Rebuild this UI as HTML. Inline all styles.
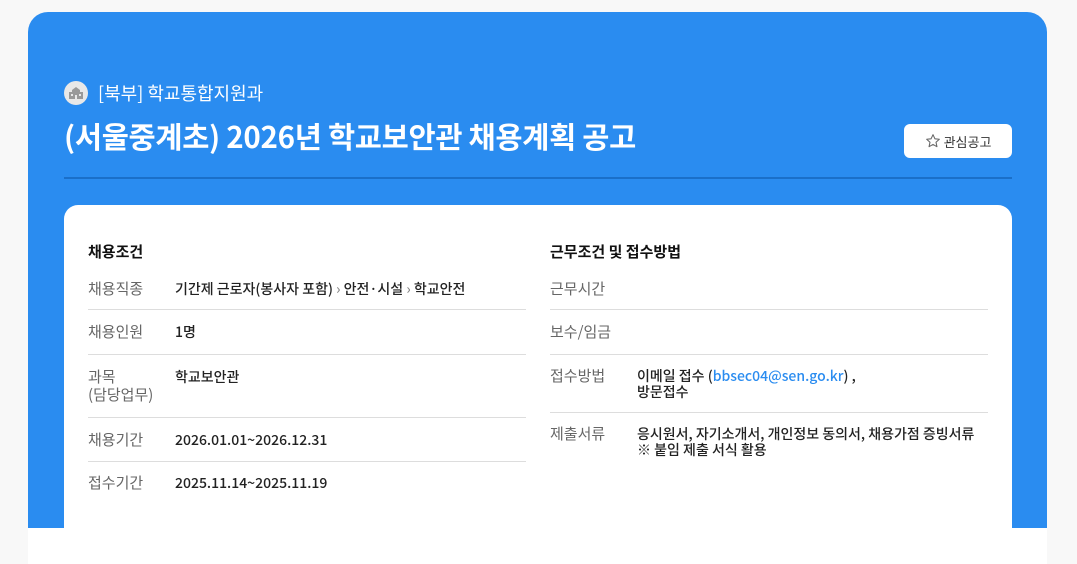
<!DOCTYPE html>
<html><head><meta charset="utf-8"><style>
*{margin:0;padding:0;box-sizing:border-box}
html,body{width:1077px;height:564px;overflow:hidden}
body{background:#f8f8f8;font-family:"Noto Sans CJK KR","Liberation Sans",sans-serif;position:relative}
.blue{position:absolute;left:28px;top:12px;width:1019px;height:516px;background:#2a8cf0;border-radius:20px 20px 0 0}
.wbot{position:absolute;left:28px;top:528px;width:1019px;height:40px;background:#fff}
.sub{position:absolute;left:64px;top:80px;color:#fff;font-size:18px;display:flex;align-items:center;gap:10px;line-height:26px}
.ic{width:24px;height:24px;border-radius:50%;background:#e8e8e8;display:flex;align-items:center;justify-content:center}
h1{position:absolute;left:64px;top:115px;color:#fff;font-size:29.5px;font-weight:bold;letter-spacing:-0.3px;line-height:42px}
.btn{position:absolute;left:904px;top:124px;width:108px;height:34px;background:#fff;border-radius:6px;font-size:13px;color:#333;display:flex;align-items:center;justify-content:center;gap:3px}
.hr{position:absolute;left:64px;top:177px;width:948px;height:2px;background:#1a6fc9}
.card{position:absolute;left:64px;top:205px;width:948px;height:359px;background:#fff;border-radius:14px 14px 0 0}
.col{position:absolute;top:39px;width:438px}
.t{font-size:15px;font-weight:bold;color:#111;height:24px;line-height:16px}
.r{display:flex;border-bottom:1px solid #ddd}
.r:last-child{border-bottom:none}
.l{width:87px;font-size:15px;color:#666;line-height:18px;flex:none}
.v{font-size:14px;color:#222;line-height:16px;padding-top:1px;font-weight:500}
a{color:#2a8cf0;text-decoration:none}
</style></head><body>
<div class="blue"></div><div class="wbot"></div>
<div class="sub"><div class="ic"><svg width="16" height="14" viewBox="0 0 16 14"><path d="M8 1 L12 4 V6 H15 V13 H1 V6 H4 V4 Z" fill="#999"/><rect x="7" y="9" width="2" height="4" fill="#e8e8e8"/><rect x="3" y="8" width="2" height="2" fill="#e8e8e8"/><rect x="11" y="8" width="2" height="2" fill="#e8e8e8"/></svg></div><span>[북부] 학교통합지원과</span></div>
<h1>(서울중계초) 2026년 학교보안관 채용계획 공고</h1>
<div class="btn"><svg width="16" height="16" viewBox="0 0 24 24"><path d="M12 2.5l2.9 6.2 6.6.7-5 4.5 1.4 6.6L12 17.2l-5.9 3.3 1.4-6.6-5-4.5 6.6-.7z" fill="none" stroke="#666" stroke-width="1.6" stroke-linejoin="round"/></svg>관심공고</div>
<div class="hr"></div>
<div class="card">
<div class="col" style="left:24px">
<div class="t">채용조건</div>
<div class="r" style="padding:12px 0 11px"><div class="l">채용직종</div><div class="v">기간제 근로자(봉사자 포함) <span style="color:#888">›</span> 안전·시설 <span style="color:#888">›</span> 학교안전</div></div>
<div class="r" style="padding:13px 0"><div class="l">채용인원</div><div class="v">1명</div></div>
<div class="r" style="padding:13px 0 13px"><div class="l">과목<br>(담당업무)</div><div class="v">학교보안관</div></div>
<div class="r" style="padding:13px 0 12px"><div class="l">채용기간</div><div class="v">2026.01.01~2026.12.31</div></div>
<div class="r" style="padding:12px 0"><div class="l">접수기간</div><div class="v">2025.11.14~2025.11.19</div></div>
</div>
<div class="col" style="left:486px">
<div class="t">근무조건 및 접수방법</div>
<div class="r" style="padding:12px 0 11px"><div class="l">근무시간</div><div class="v"></div></div>
<div class="r" style="padding:13px 0"><div class="l">보수/임금</div><div class="v"></div></div>
<div class="r" style="padding:12px 0 12px"><div class="l">접수방법</div><div class="v">이메일 접수 (<a>bbsec04@sen.go.kr</a>) ,<br>방문접수</div></div>
<div class="r" style="padding:12px 0"><div class="l">제출서류</div><div class="v">응시원서, 자기소개서, 개인정보 동의서, 채용가점 증빙서류<br>※ 붙임 제출 서식 활용</div></div>
</div>
</div>
</body></html>
